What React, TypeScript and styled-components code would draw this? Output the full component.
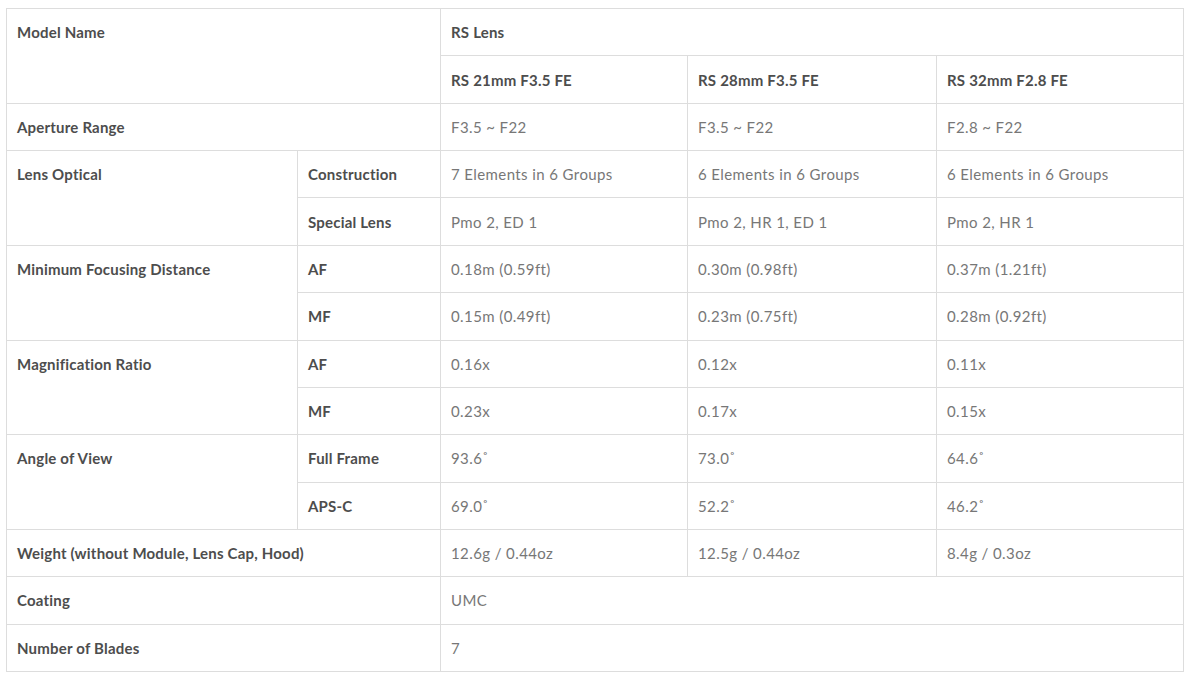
import React from "react";
import styled, { createGlobalStyle } from "styled-components";

const GlobalStyle = createGlobalStyle`
  body {
    margin: 0;
    background: #fff;
    font-family: Lato, "Open Sans", sans-serif;
  }
`;

const Page = styled.div`
  padding: 8px 6px 0 6px;
`;

const SpecTable = styled.table`
  width: 1177px;
  border-collapse: collapse;
  table-layout: fixed;
  font-size: 15px;
`;

const Row = styled.tr`
  height: 47.36px;
`;

const Label = styled.td<{ $top?: boolean }>`
  border: 1px solid #dddddd;
  padding: 0 10px;
  color: #4d4d4d;
  font-weight: 700;
  letter-spacing: 0.2px;
  vertical-align: ${(p) => (p.$top ? "top" : "middle")};
  padding-top: ${(p) => (p.$top ? "14px" : "0")};
`;

const Value = styled.td`
  border: 1px solid #dddddd;
  padding: 0 10px;
  color: #777777;
  font-weight: 400;
  letter-spacing: 0.4px;
`;

type Spec = {
  label: string;
  subs: { name: string; values: string[] }[];
};

const specs: Spec[] = [
  {
    label: "Lens Optical",
    subs: [
      { name: "Construction", values: ["7 Elements in 6 Groups", "6 Elements in 6 Groups", "6 Elements in 6 Groups"] },
      { name: "Special Lens", values: ["Pmo 2, ED 1", "Pmo 2, HR 1, ED 1", "Pmo 2, HR 1"] },
    ],
  },
  {
    label: "Minimum Focusing Distance",
    subs: [
      { name: "AF", values: ["0.18m (0.59ft)", "0.30m (0.98ft)", "0.37m (1.21ft)"] },
      { name: "MF", values: ["0.15m (0.49ft)", "0.23m (0.75ft)", "0.28m (0.92ft)"] },
    ],
  },
  {
    label: "Magnification Ratio",
    subs: [
      { name: "AF", values: ["0.16x", "0.12x", "0.11x"] },
      { name: "MF", values: ["0.23x", "0.17x", "0.15x"] },
    ],
  },
  {
    label: "Angle of View",
    subs: [
      { name: "Full Frame", values: ["93.6˚", "73.0˚", "64.6˚"] },
      { name: "APS-C", values: ["69.0˚", "52.2˚", "46.2˚"] },
    ],
  },
];

const App = () => (
  <>
    <GlobalStyle />
    <Page>
      <SpecTable>
        <colgroup>
          <col style={{ width: 291 }} />
          <col style={{ width: 143 }} />
          <col style={{ width: 247 }} />
          <col style={{ width: 249 }} />
          <col style={{ width: 247 }} />
        </colgroup>
        <tbody>
          <Row>
            <Label $top colSpan={2} rowSpan={2}>Model Name</Label>
            <Label colSpan={3}>RS Lens</Label>
          </Row>
          <Row>
            <Label>RS 21mm F3.5 FE</Label>
            <Label>RS 28mm F3.5 FE</Label>
            <Label>RS 32mm F2.8 FE</Label>
          </Row>
          <Row>
            <Label colSpan={2}>Aperture Range</Label>
            <Value>F3.5 ~ F22</Value>
            <Value>F3.5 ~ F22</Value>
            <Value>F2.8 ~ F22</Value>
          </Row>
          {specs.map((spec) =>
            spec.subs.map((sub, i) => (
              <Row key={spec.label + sub.name}>
                {i === 0 && (
                  <Label $top rowSpan={spec.subs.length}>{spec.label}</Label>
                )}
                <Label>{sub.name}</Label>
                {sub.values.map((v, j) => (
                  <Value key={j}>{v}</Value>
                ))}
              </Row>
            ))
          )}
          <Row>
            <Label colSpan={2}>Weight (without Module, Lens Cap, Hood)</Label>
            <Value>12.6g / 0.44oz</Value>
            <Value>12.5g / 0.44oz</Value>
            <Value>8.4g / 0.3oz</Value>
          </Row>
          <Row>
            <Label colSpan={2}>Coating</Label>
            <Value colSpan={3}>UMC</Value>
          </Row>
          <Row>
            <Label colSpan={2}>Number of Blades</Label>
            <Value colSpan={3}>7</Value>
          </Row>
        </tbody>
      </SpecTable>
    </Page>
  </>
);

export default App;
